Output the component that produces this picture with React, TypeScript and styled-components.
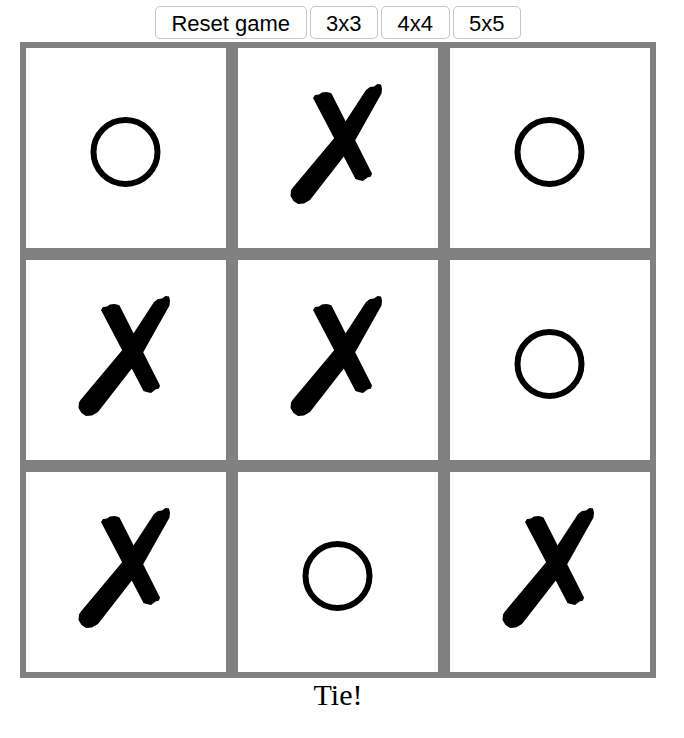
import React, { useState } from "react";
import styled, { createGlobalStyle } from "styled-components";

const GlobalStyle = createGlobalStyle`
  html, body {
    margin: 0;
    padding: 0;
    background: #ffffff;
  }
`;

const Page = styled.div`
  width: 636px;
  margin-left: 20px;
  display: flex;
  flex-direction: column;
  align-items: center;
`;

const Toolbar = styled.div`
  display: flex;
  gap: 3px;
  margin-top: 6px;
  margin-bottom: 3px;
`;

const Button = styled.button`
  font-family: "Liberation Sans", Arial, sans-serif;
  font-size: 22px;
  line-height: 25px;
  height: 33px;
  padding: 4px 15.5px 2px;
  box-sizing: border-box;
  border: 1px solid #c6c6c6;
  border-radius: 5px;
  background: #ffffff;
  color: #000000;
  cursor: pointer;
`;

const Board = styled.div<{ $size: number }>`
  display: grid;
  grid-template-columns: repeat(${(p) => p.$size}, 1fr);
  width: 636px;
  box-sizing: border-box;
  gap: 12px;
  padding: 6px;
  background: #808080;
`;

const Cell = styled.div`
  aspect-ratio: 1 / 1;
  background: #ffffff;
  display: flex;
`;

const MarkSvg = styled.svg`
  width: 100%;
  height: 100%;
  display: block;
`;

const Status = styled.div`
  font-family: "Liberation Serif", "Times New Roman", serif;
  font-size: 30px;
  color: #000000;
`;

type Mark = "X" | "O" | "";

const XMark = () => (
  <MarkSvg viewBox="0 0 200 200">
    <path
      fill="#000"
      d="M75,50 L77,47 L81,46.5 L84,44.5 L88,44 L91,44.5 L93.5,45.5 L113,84 L134,125.5 L133,128.5 L129.5,129.5 L125,133 L120.5,132 L117.5,131 L96,90 Z"
    />
    <path
      fill="#000"
      d="M128,42 L132,39 L136,38.5 L139.5,36 L143,36.5 L144,40.5 L143.5,45.5 L114,98 L72,152 L66,155.5 L60,156 L55.5,153 L52.5,148 L53,142.5 L54.5,140 L98,88 Z"
    />
  </MarkSvg>
);

const OMark = () => (
  <MarkSvg viewBox="0 0 200 200">
    <circle cx="99.5" cy="104" r="32" fill="none" stroke="#000" strokeWidth="6" />
  </MarkSvg>
);

const initial: Mark[] = ["O", "X", "O", "X", "X", "O", "X", "O", "X"];

export default function App() {
  const [size, setSize] = useState(3);
  const [cells, setCells] = useState<Mark[]>(initial);

  const reset = (n: number) => {
    setSize(n);
    setCells(Array(n * n).fill(""));
  };

  return (
    <>
      <GlobalStyle />
      <Page>
        <Toolbar>
          <Button onClick={() => reset(size)}>Reset game</Button>
          <Button onClick={() => reset(3)}>3x3</Button>
          <Button onClick={() => reset(4)}>4x4</Button>
          <Button onClick={() => reset(5)}>5x5</Button>
        </Toolbar>
        <Board $size={size}>
          {cells.map((c, i) => (
            <Cell key={i}>{c === "X" ? <XMark /> : c === "O" ? <OMark /> : null}</Cell>
          ))}
        </Board>
        <Status>Tie!</Status>
      </Page>
    </>
  );
}
